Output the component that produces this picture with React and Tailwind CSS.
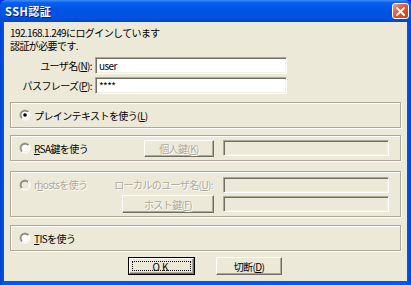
import React from "react";

const face = "bg-[#ece9d8]";

const Radio = ({ checked, disabled }) => (
  <svg width="12" height="12" viewBox="0 0 12 12" className="shrink-0">
    <defs>
      <linearGradient id="ro" x1="0" y1="0" x2="1" y2="1">
        <stop offset="50%" stopColor="#aca899" />
        <stop offset="50%" stopColor="#ffffff" />
      </linearGradient>
      <linearGradient id="ri" x1="0" y1="0" x2="1" y2="1">
        <stop offset="50%" stopColor="#716f64" />
        <stop offset="50%" stopColor="#f1efe2" />
      </linearGradient>
    </defs>
    <circle cx="6" cy="6" r="5.5" fill="url(#ro)" />
    <circle cx="6" cy="6" r="4.5" fill="url(#ri)" />
    <circle cx="6" cy="6" r="3.6" fill={disabled ? "#ece9d8" : "#ffffff"} />
    {checked && <circle cx="6" cy="6" r="1.8" fill="#000" />}
  </svg>
);

const Sunken = ({ value, disabled, className = "" }) => (
  <div
    className={`h-[16px] border border-t-[#aca899] border-l-[#aca899] border-b-white border-r-white shadow-[inset_1px_1px_0_#716f64,inset_-1px_-1px_0_#f1efe2] px-[3px] flex items-center ${
      disabled ? face : "bg-white"
    } ${className}`}
  >
    {value}
  </div>
);

const Button = ({ children, disabled, isDefault, className = "" }) => (
  <div
    className={`flex items-center justify-center ${face} ${
      isDefault ? "border border-black p-0" : ""
    } ${className}`}
  >
    <div className="w-full h-full flex items-center justify-center border border-t-white border-l-white border-b-[#716f64] border-r-[#716f64] shadow-[inset_-1px_-1px_0_#aca899]">
      <div
        className={`flex items-center justify-center ${
          isDefault ? "border border-dotted border-black w-[calc(100%-4px)] h-[calc(100%-4px)]" : ""
        } ${disabled ? "text-[#aca899] [text-shadow:1px_1px_0_#fff]" : "text-black"}`}
      >
        {children}
      </div>
    </div>
  </div>
);

const Group = ({ children, className = "" }) => (
  <div
    className={`mx-[6px] border border-[#aca899] shadow-[inset_1px_1px_0_#fff,1px_1px_0_#fff] ${className}`}
  >
    {children}
  </div>
);

const U = ({ children }) => <span className="underline underline-offset-1">{children}</span>;

export default function App() {
  const dim = "text-[#aca899] [text-shadow:1px_1px_0_#fff]";
  return (
    <div
      className="w-[411px] h-[285px] flex flex-col bg-[#0831d9] text-[10px] leading-[11px] tracking-[-0.6px] text-black"
      style={{ fontFamily: '"Noto Sans CJK JP", "Liberation Sans", sans-serif' }}
    >
      {/* title bar */}
      <div className="h-[22px] shrink-0 rounded-t-[6px] flex items-center justify-between pl-[5px] pr-[2px] bg-[linear-gradient(180deg,#3d8ff8_0%,#0b5fee_12%,#0054e3_45%,#0052e0_80%,#0046cc_100%)]">
        <span className="text-white font-bold text-[11px] tracking-[0.5px] [text-shadow:1px_1px_0_#0a1e80]">
          SSH認証
        </span>
        <div className="w-[17px] h-[16px] rounded-[3px] border border-white bg-[linear-gradient(135deg,#f0a088_0%,#e2603a_40%,#c53d17_100%)] flex items-center justify-center">
          <svg width="9" height="9" viewBox="0 0 9 9">
            <path d="M1 1 L8 8 M8 1 L1 8" stroke="#fff" strokeWidth="1.8" strokeLinecap="square" />
          </svg>
        </div>
      </div>

      {/* client */}
      <div className="flex-1 flex px-[4px] pb-[4px] bg-[linear-gradient(90deg,#0040d0_0px,#0058ee_4px,#0058ee_calc(100%-4px),#0040d0_100%)]">
        <div className={`flex-1 ${face} flex flex-col pt-[4px]`}>
          <div className="pl-[6px] leading-[13px]">192.168.1.249にログインしています</div>
          <div className="pl-[6px] leading-[13px]">認証が必要です.</div>

          <div className="flex items-center mt-[5px]">
            <div className="w-[89px] text-right pr-[1px]">
              ユーザ名(<U>N</U>):
            </div>
            <Sunken value="user" className="w-[192px] ml-[2px] h-[17px]" />
          </div>
          <div className="flex items-center mt-[3px]">
            <div className="w-[89px] text-right pr-[1px]">
              パスフレーズ(<U>P</U>):
            </div>
            <Sunken value="****" className="w-[192px] ml-[2px] h-[17px]" />
          </div>

          <Group className="mt-[8px] h-[26px] flex items-center pl-[8px]">
            <Radio checked />
            <span className="ml-[3px]">
              プレインテキストを使う(<U>L</U>)
            </span>
          </Group>

          <Group className="mt-[7px] h-[26px] flex items-center pl-[8px]">
            <div className="w-[195px] flex items-center">
              <Radio />
              <span className="ml-[3px]">
                <U>R</U>SA鍵を使う
              </span>
              <Button disabled className="ml-auto w-[70px] h-[17px]">
                個人鍵(<U>K</U>)
              </Button>
            </div>
            <Sunken disabled className="ml-[9px] w-[166px]" />
          </Group>

          <Group className="mt-[10px] h-[46px] flex flex-col pl-[8px] pt-[4px] gap-[2px]">
            <div className="flex items-center h-[17px]">
              <div className="w-[195px] flex items-center">
                <Radio disabled />
                <span className={`ml-[3px] ${dim}`}>
                  r<U>h</U>ostsを使う
                </span>
                <span className={`ml-auto pr-[1px] ${dim}`}>
                  ローカルのユーザ名(<U>U</U>):
                </span>
              </div>
              <Sunken disabled className="ml-[9px] w-[166px]" />
            </div>
            <div className="flex items-center h-[18px]">
              <div className="w-[195px] flex items-center justify-end">
                <Button disabled className="w-[92px] h-[18px]">
                  ホスト鍵(<U>F</U>)
                </Button>
              </div>
              <Sunken disabled className="ml-[9px] w-[166px]" />
            </div>
          </Group>

          <Group className="mt-[8px] h-[26px] flex items-center pl-[8px]">
            <Radio />
            <span className="ml-[3px]">
              <U>T</U>ISを使う
            </span>
          </Group>

          <div className="flex mt-[6px] pl-[124px] gap-[21px]">
            <Button isDefault className="w-[67px] h-[18px]">
              <span className="tracking-[2px]">OK</span>
            </Button>
            <Button className="w-[66px] h-[18px]">
              切断(<U>D</U>)
            </Button>
          </div>
        </div>
      </div>
    </div>
  );
}
